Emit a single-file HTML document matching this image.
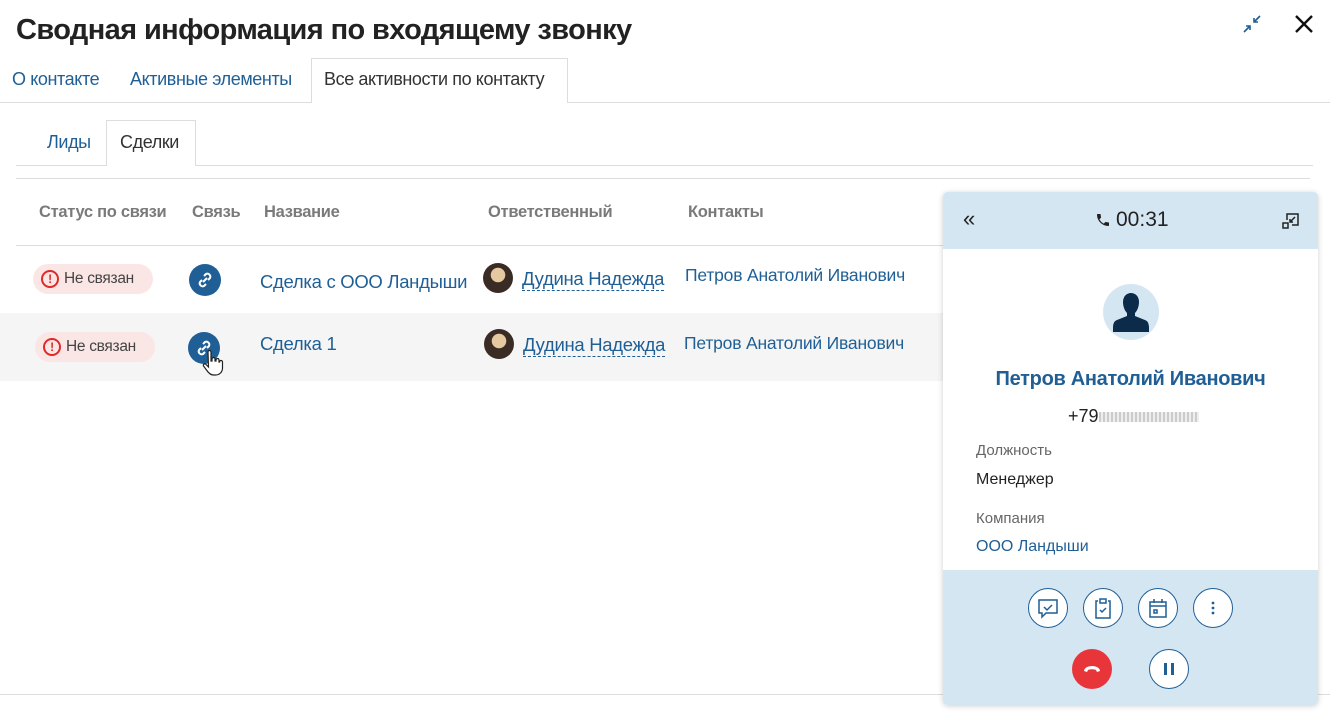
<!DOCTYPE html>
<html><head><meta charset="utf-8"><style>
*{box-sizing:border-box;margin:0;padding:0}
body{width:1330px;height:718px;overflow:hidden;background:#fff;font-family:"Liberation Sans",sans-serif;position:relative;color:#222}
.a{position:absolute;white-space:nowrap}
.blue{color:#1f5f96}
.hd{color:#7a7a7a;font-size:16.5px;font-weight:bold;letter-spacing:-0.3px}
.badge{background:#fbe6e6;border-radius:15px;height:30px;font-size:15.5px;color:#444;display:flex;align-items:center;padding-left:8px;letter-spacing:-0.3px}
.ex{width:18px;height:18px;border:2px solid #e02a2a;border-radius:50%;color:#e02a2a;font-size:12px;font-weight:bold;text-align:center;line-height:14px;margin-right:5px}
.lnk{width:32px;height:32px;border-radius:50%;background:#1f5f96}
.av{width:30px;height:30px;border-radius:50%;background:radial-gradient(circle at 50% 40%,#e6c9a0 0 30%,#3a2c25 32%)}
.person{font-size:18.5px;color:#1f5f96;border-bottom:1px dashed #1f5f96;letter-spacing:-0.3px}
.cb{width:40px;height:40px;border:1.5px solid #1f5f96;border-radius:50%;background:#fff;position:absolute;display:flex;align-items:center;justify-content:center}
</style></head><body>
<div class="a" style="left:16px;top:14px;font-size:29px;font-weight:bold;letter-spacing:-0.6px;color:#222">Сводная информация по входящему звонку</div>
<svg class="a" style="left:1243px;top:15px" width="18" height="18" viewBox="0 0 18 18" fill="none" stroke="#1f5f96" stroke-width="1.6"><path d="M17 1L11 7M11 3V7H15M1 17L7 11M3 11H7V15"/></svg>
<svg class="a" style="left:1294px;top:14px" width="20" height="20" viewBox="0 0 20 20" stroke="#111" stroke-width="2.4"><path d="M2 2L18 18M18 2L2 18"/></svg>

<div class="a" style="left:0;top:102px;width:1330px;height:1px;background:#ddd"></div>
<div class="a" style="left:311px;top:58px;width:257px;height:45px;border:1px solid #ddd;border-bottom:none;background:#fff"></div>
<div class="a blue" style="left:12px;top:69px;font-size:18px;letter-spacing:-0.4px">О контакте</div>
<div class="a blue" style="left:130px;top:69px;font-size:18px;letter-spacing:-0.4px">Активные элементы</div>
<div class="a" style="left:324px;top:69px;font-size:18px;letter-spacing:-0.4px;color:#333">Все активности по контакту</div>

<div class="a" style="left:16px;top:165px;width:1297px;height:1px;background:#ddd"></div>
<div class="a" style="left:106px;top:120px;width:90px;height:46px;border:1px solid #ddd;border-bottom:none;background:#fff"></div>
<div class="a blue" style="left:47px;top:132px;font-size:18px;letter-spacing:-0.4px">Лиды</div>
<div class="a" style="left:120px;top:132px;font-size:18px;letter-spacing:-0.4px;color:#333">Сделки</div>
<div class="a" style="left:16px;top:178px;width:1294px;height:1px;background:#ddd"></div>

<div class="a hd" style="left:39px;top:203px">Статус по связи</div>
<div class="a hd" style="left:192px;top:203px">Связь</div>
<div class="a hd" style="left:264px;top:203px">Название</div>
<div class="a hd" style="left:488px;top:203px">Ответственный</div>
<div class="a hd" style="left:688px;top:203px">Контакты</div>
<div class="a" style="left:16px;top:245px;width:930px;height:1px;background:#ddd"></div>
<div class="a" style="left:0;top:313px;width:945px;height:68px;background:#f5f5f5"></div>

<div class="a badge" style="left:33px;top:264px;width:120px"><div class="ex">!</div>Не связан</div>
<div class="a lnk" style="left:189px;top:264px"><svg width="32" height="32" viewBox="0 0 32 32" fill="none" stroke="#fff" stroke-width="2"><path d="M14 18L18 14M15 12l2-2a3 3 0 014 4l-2 2M17 20l-2 2a3 3 0 01-4-4l2-2"/></svg></div>
<div class="a blue" style="left:260px;top:271px;font-size:18.5px;letter-spacing:-0.3px">Сделка с ООО Ландыши</div>
<div class="a av" style="left:483px;top:263px"></div>
<div class="a person" style="left:522px;top:268px">Дудина Надежда</div>
<div class="a blue" style="left:685px;top:265px;font-size:17.5px;letter-spacing:-0.2px">Петров Анатолий Иванович</div>

<div class="a badge" style="left:35px;top:332px;width:120px"><div class="ex">!</div>Не связан</div>
<div class="a lnk" style="left:188px;top:332px"><svg width="32" height="32" viewBox="0 0 32 32" fill="none" stroke="#fff" stroke-width="2"><path d="M14 18L18 14M15 12l2-2a3 3 0 014 4l-2 2M17 20l-2 2a3 3 0 01-4-4l2-2"/></svg></div>
<svg class="a" style="left:202px;top:350px" width="22" height="28" viewBox="0 0 22 28"><path d="M6 2a1.5 1.5 0 013 0v9h1V9a1.5 1.5 0 013 0v2h1v-1a1.5 1.5 0 013 0v2h.5a1.5 1.5 0 013 0v6c0 4-3 7-7 7h-2c-3 0-5-2-7-5l-3-4a1.5 1.5 0 012-2l3 3z" fill="#fff" stroke="#222" stroke-width="1.2"/></svg>
<div class="a blue" style="left:260px;top:333px;font-size:18.5px;letter-spacing:-0.3px">Сделка 1</div>
<div class="a av" style="left:484px;top:329px"></div>
<div class="a person" style="left:523px;top:334px">Дудина Надежда</div>
<div class="a blue" style="left:684px;top:333px;font-size:17.5px;letter-spacing:-0.2px">Петров Анатолий Иванович</div>

<div class="a" style="left:0;top:694px;width:1330px;height:1px;background:#ddd"></div>

<div class="a" style="left:943px;top:192px;width:375px;height:513px;border-radius:5px;background:#d5e6f3;box-shadow:0 1px 6px rgba(0,0,0,.2);overflow:hidden">
  <div class="a" style="left:0;top:57px;width:375px;height:321px;background:#fff"></div>
  <div class="a" style="left:20px;top:14px;font-size:22px;color:#222">«</div>
  <svg class="a" style="left:152px;top:20px" width="16" height="16" viewBox="0 0 24 24"><path fill="#222" d="M6.6 10.8a15 15 0 006.6 6.6l2.2-2.2c.3-.3.7-.4 1-.2 1.1.4 2.3.6 3.6.6.6 0 1 .4 1 1V20c0 .6-.4 1-1 1A17 17 0 013 4c0-.6.4-1 1-1h3.5c.6 0 1 .4 1 1 0 1.3.2 2.5.6 3.6.1.3 0 .7-.2 1z"/></svg>
  <div class="a" style="left:173px;top:16px;font-size:21px;color:#222">00:31</div>
  <svg class="a" style="left:339px;top:20px" width="18" height="18" viewBox="0 0 18 18" fill="none" stroke="#222" stroke-width="1.5"><path d="M5 8V2H16V13H10M1 11H6V16H1zM13 5L8 10M8 7V10H11"/></svg>
  <div class="a" style="left:160px;top:92px;width:56px;height:56px;border-radius:50%;background:#d5e6f3;overflow:hidden"><svg width="56" height="56" viewBox="0 0 56 56"><path fill="#0c2a4a" d="M20 18c0-6 4-9 8-9s8 3 8 9c0 5-2 9-4 11v3l10 4c3 1 4 4 4 8v4H10v-4c0-4 1-7 4-8l10-4v-3c-2-2-4-6-4-11z"/></svg></div>
  <div class="a" style="left:0;width:375px;text-align:center;top:176px;font-size:20px;font-weight:bold;color:#1f5f96;letter-spacing:-0.3px">Петров Анатолий Иванович</div>
  <div class="a" style="left:125px;top:214px;font-size:18px;color:#222">+79<span style="display:inline-block;width:100px;height:10px;background:repeating-linear-gradient(90deg,#ccc 0 2px,#eee 2px 4px);vertical-align:middle"></span></div>
  <div class="a" style="left:33px;top:250px;font-size:15px;color:#666">Должность</div>
  <div class="a" style="left:33px;top:279px;font-size:16px;color:#222">Менеджер</div>
  <div class="a" style="left:33px;top:318px;font-size:15px;color:#666">Компания</div>
  <div class="a" style="left:33px;top:346px;font-size:16px;color:#1f5f96">ООО Ландыши</div>
  <div class="cb" style="left:85px;top:396px"><svg width="22" height="22" viewBox="0 0 22 22" fill="none" stroke="#1f5f96" stroke-width="1.5"><path d="M2 3H20V16H9L5 20V16H2z M7 10l3 3 5-5"/></svg></div>
  <div class="cb" style="left:140px;top:396px"><svg width="22" height="22" viewBox="0 0 22 22" fill="none" stroke="#1f5f96" stroke-width="1.5"><path d="M6 4H4V21H18V4H16M8 2H14V6H8z M8 13l2 2 4-4"/></svg></div>
  <div class="cb" style="left:195px;top:396px"><svg width="22" height="22" viewBox="0 0 22 22" fill="none" stroke="#1f5f96" stroke-width="1.5"><path d="M3 5H19V20H3zM3 9H19M7 2V6M15 2V6M7 13H10V16H7z"/></svg></div>
  <div class="cb" style="left:250px;top:396px"><svg width="22" height="22" viewBox="0 0 22 22" fill="#1f5f96"><circle cx="11" cy="6" r="1.4"/><circle cx="11" cy="11" r="1.4"/><circle cx="11" cy="16" r="1.4"/></svg></div>
  <div class="a" style="left:129px;top:457px;width:40px;height:40px;border-radius:50%;background:#e8353a"><svg width="40" height="40" viewBox="0 0 40 40"><path fill="#fff" d="M12 22c0-3 4-5 8-5s8 2 8 5l-3 1-1-2c-2-1-6-1-8 0l-1 2z"/></svg></div>
  <div class="cb" style="left:206px;top:457px"><svg width="14" height="14" viewBox="0 0 14 14" fill="#1f5f96"><rect x="2" y="1" width="3" height="12"/><rect x="9" y="1" width="3" height="12"/></svg></div>
</div>
</body></html>
